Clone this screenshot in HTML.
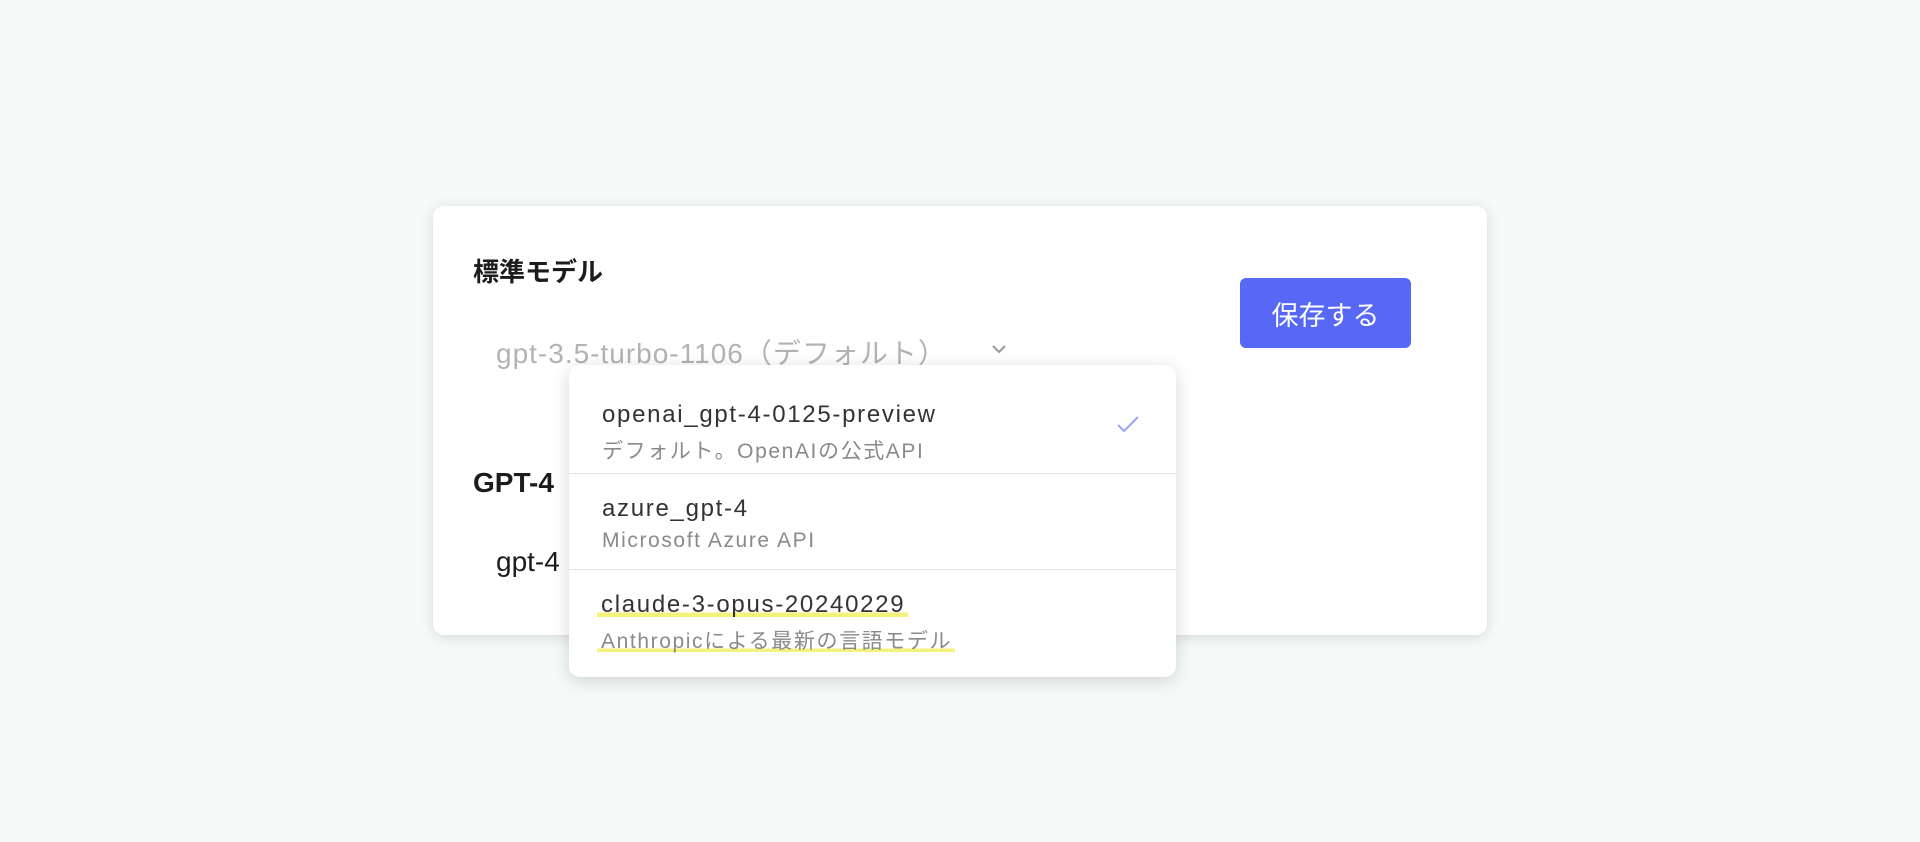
<!DOCTYPE html>
<html><head><meta charset="utf-8"><style>
body{margin:0;width:1920px;height:842px;background:#f6fbf9;font-family:"Liberation Sans","Noto Sans CJK JP",sans-serif;position:relative;overflow:hidden}
.card{position:absolute;left:433px;top:206px;width:1054px;height:429px;background:#fff;border-radius:11px;box-shadow:0 2px 14px rgba(0,0,0,.14)}
.abs{position:absolute;white-space:nowrap}
.h{font-weight:bold;font-size:26px;color:#1c1c1c}
.btn{position:absolute;left:1240px;top:278px;width:171px;height:70px;background:#5668f4;border-radius:6px;color:#fff;font-size:27px;display:flex;align-items:center;justify-content:center}
.dd{position:absolute;left:569px;top:365px;width:607px;height:312px;background:#fff;border-radius:11px;box-shadow:0 4px 18px rgba(0,0,0,.16)}
.t{font-size:24px;color:#333;letter-spacing:1.7px}
.s{font-size:21px;color:#8a8a8a;letter-spacing:1.6px}
.hl{background:linear-gradient(transparent 80%,#f3f37c 80%,#f3f37c 96%,transparent 96%)}
.div{position:absolute;left:0;width:607px;height:1px;background:#e6e6e6}
</style></head><body>
<div class="card"></div>
<div class="abs h" style="left:473px;top:252px">標準モデル</div>
<div class="abs" style="left:496px;top:332px;font-size:28px;color:#b3b3b3;letter-spacing:1px">gpt-3.5-turbo-1106（デフォルト）</div>
<svg class="abs" style="left:990px;top:343px" width="18" height="12" viewBox="0 0 18 12"><path d="M3 3l6 6 6-6" stroke="#999" stroke-width="2" fill="none"/></svg>
<div class="btn">保存する</div>
<div class="abs h" style="left:473px;top:467px;font-size:28px">GPT-4</div>
<div class="abs" style="left:496px;top:546px;font-size:28px;color:#1c1c1c">gpt-4</div>
<div class="dd">
<div class="abs t" style="left:33px;top:36px">openai_gpt-4-0125-preview</div>
<div class="abs s" style="left:33px;top:70px">デフォルト。OpenAIの公式API</div>
<svg class="abs" style="left:547px;top:49px" width="24" height="20" viewBox="0 0 24 20"><path d="M2 11l6 6L22 3" stroke="#9aa5f5" stroke-width="2" fill="none"/></svg>
<div class="div" style="top:108px"></div>
<div class="abs t" style="left:33px;top:130px">azure_gpt-4</div>
<div class="abs s" style="left:33px;top:164px">Microsoft Azure API</div>
<div class="div" style="top:204px"></div>
<div class="abs t" style="left:33px;top:226px"><span class="hl" style="padding:0 3px 0 4px;margin-left:-5px">claude-3-opus-20240229</span></div>
<div class="abs s" style="left:33px;top:260px"><span class="hl" style="padding:0 3px 0 4px;margin-left:-5px">Anthropicによる最新の言語モデル</span></div>
</div>
</body></html>
